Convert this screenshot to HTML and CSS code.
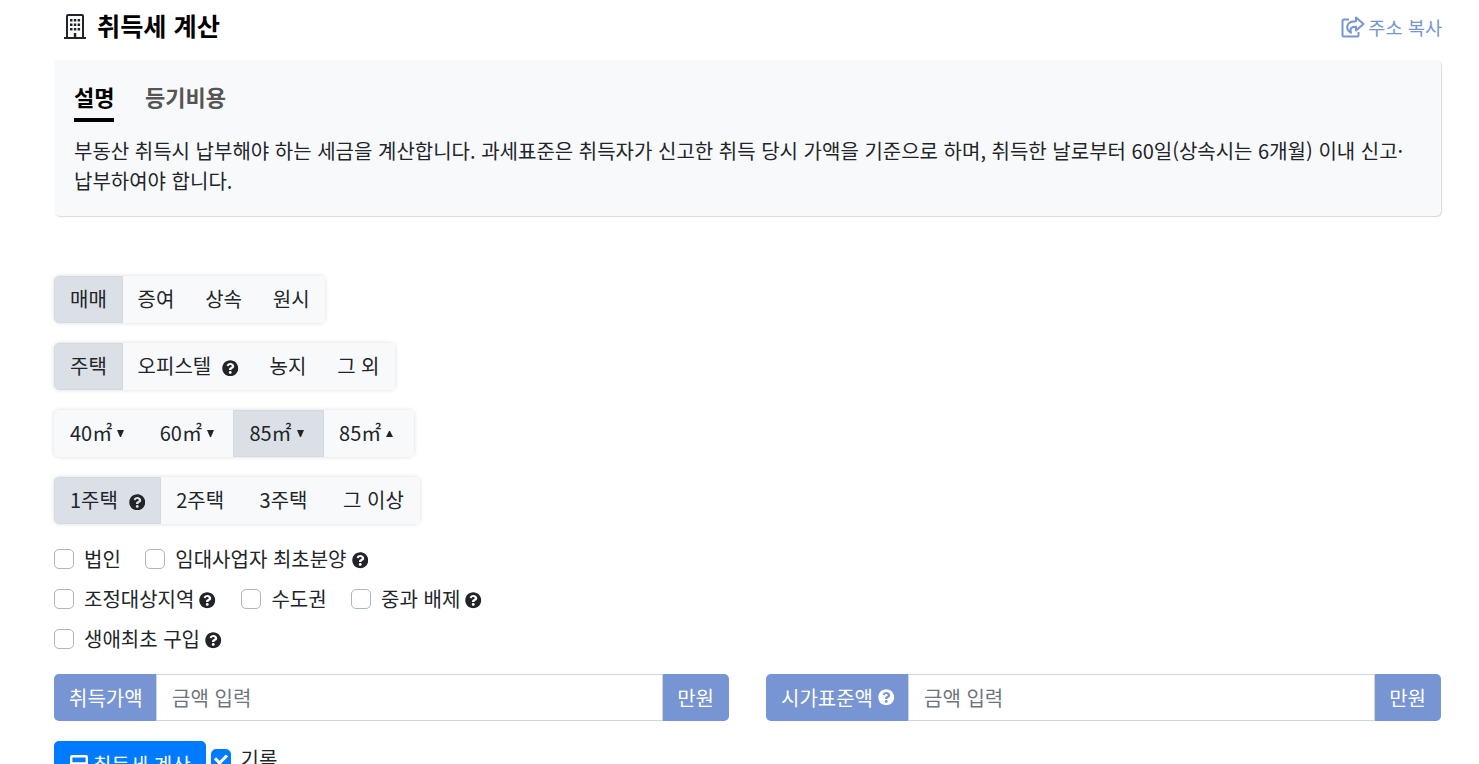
FILE: index.html
```html
<!DOCTYPE html>
<html lang="ko">
<head>
  <meta charset="UTF-8" />
  <meta name="viewport" content="width=device-width, initial-scale=1.0" />
  <title>취득세 계산</title>
  <link rel="stylesheet" href="styles.css">
</head>
<body>

  <!-- 아이콘 -->
  <svg class="sprite" aria-hidden="true">
    <symbol id="help" viewBox="0 0 512 512">
      <path d="M504 256c0 136.997-111.043 248-248 248S8 392.997 8 256C8 119.083 119.043 8 256 8s248 111.083 248 248zM262.655 90c-54.497 0-89.255 22.957-116.549 63.758-3.536 5.286-2.353 12.415 2.715 16.258l34.699 26.31c5.205 3.947 12.621 3.008 16.665-2.122 17.864-22.658 30.113-35.797 57.303-35.797 20.429 0 45.698 13.148 45.698 32.958 0 14.976-12.363 22.667-32.534 33.976C247.128 238.528 216 254.941 216 296v4c0 6.627 5.373 12 12 12h56c6.627 0 12-5.373 12-12v-1.333c0-28.462 83.186-29.647 83.186-106.667 0-58.002-60.165-102-116.531-102zM256 338c-25.365 0-46 20.635-46 46 0 25.364 20.635 46 46 46s46-20.636 46-46c0-25.365-20.635-46-46-46z"/>
    </symbol>
  </svg>

  <main class="container">
    <header class="page-header">
      <h1 class="title">
        <svg class="icon-building" viewBox="0 0 22 26">
          <path fill="none" stroke="currentColor" stroke-width="2" d="M3 24V3q0-1 1-1h14q1 0 1 1v21M0 25h22"/>
          <path fill="currentColor" d="M6 6h2.500v2.500H6zM9.800 6h2.500v2.500H9.800zM13.600 6h2.500v2.500h-2.500zM6 10.500h2.500V13H6zM9.800 10.500h2.500V13H9.800zM13.600 10.500h2.500V13h-2.500zM6 15h2.500v2.500H6zM9.800 15h2.500v2.500H9.800zM13.600 15h2.500v2.500h-2.500zM9.800 20h2.500v4H9.800z"/>
        </svg>
        취득세 계산
      </h1>
      <a class="copy-link" href="#">
        <svg class="icon-share" viewBox="0 0 24 22">
          <path d="M8 3.500H3q-1.500 0-1.500 1.500v14q0 1.500 1.500 1.500h13q1.500 0 1.500-1.500v-3"/>
          <path d="M15 1.500l7.500 6.500-7.500 6.500v-3.800c-4.500 0-6.500 1.300-5 6-5.800-3.500-5.500-11.500 5-11.500z"/>
        </svg>
        <span>주소 복사</span>
      </a>
    </header>

    <section class="info">
      <nav class="tabs">
        <a class="tab active" href="#">설명</a>
        <a class="tab" href="#">등기비용</a>
      </nav>
      <p>부동산 취득시 납부해야 하는 세금을 계산합니다. 과세표준은 취득자가 신고한 취득 당시 가액을 기준으로 하며, 취득한 날로부터 60일(상속시는 6개월) 이내 신고·납부하여야 합니다.</p>
    </section>

    <form class="calc">
      <div class="btn-group">
        <button type="button" class="btn active">매매</button>
        <button type="button" class="btn">증여</button>
        <button type="button" class="btn">상속</button>
        <button type="button" class="btn">원시</button>
      </div>
      <div class="btn-group">
        <button type="button" class="btn active">주택</button>
        <button type="button" class="btn">오피스텔<svg class="help"><use href="#help"/></svg></button>
        <button type="button" class="btn">농지</button>
        <button type="button" class="btn">그 외</button>
      </div>
      <div class="btn-group">
        <button type="button" class="btn wide">40㎡<i class="down"></i></button>
        <button type="button" class="btn wide">60㎡<i class="down"></i></button>
        <button type="button" class="btn wide active">85㎡<i class="down"></i></button>
        <button type="button" class="btn wide">85㎡<i class="up"></i></button>
      </div>
      <div class="btn-group">
        <button type="button" class="btn active">1주택<svg class="help"><use href="#help"/></svg></button>
        <button type="button" class="btn wide">2주택</button>
        <button type="button" class="btn wide">3주택</button>
        <button type="button" class="btn">그 이상</button>
      </div>

      <div class="checks">
        <div class="check-row">
          <label class="check"><input type="checkbox">법인</label>
          <label class="check"><input type="checkbox">임대사업자 최초분양<svg class="help"><use href="#help"/></svg></label>
        </div>
        <div class="check-row">
          <label class="check"><input type="checkbox">조정대상지역<svg class="help"><use href="#help"/></svg></label>
          <label class="check"><input type="checkbox">수도권</label>
          <label class="check"><input type="checkbox">중과 배제<svg class="help"><use href="#help"/></svg></label>
        </div>
        <div class="check-row">
          <label class="check"><input type="checkbox">생애최초 구입<svg class="help"><use href="#help"/></svg></label>
        </div>
      </div>

      <div class="amounts">
        <div class="input-group">
          <span class="addon">취득가액</span>
          <input type="text" placeholder="금액 입력">
          <span class="addon unit">만원</span>
        </div>
        <div class="input-group">
          <span class="addon">시가표준액<svg class="help"><use href="#help"/></svg></span>
          <input type="text" placeholder="금액 입력">
          <span class="addon unit">만원</span>
        </div>
      </div>

      <div class="actions">
        <button type="button" class="submit">
          <svg class="icon-calc" viewBox="0 0 18 20"><path fill="none" stroke="currentColor" stroke-width="2.400" d="M1.200 2.200q0-1 1-1h13.600q1 0 1 1v15.600q0 1-1 1H2.200q-1 0-1-1zM1.200 8.500h15.600"/></svg>
          취득세 계산
        </button>
        <label class="check"><input type="checkbox" checked>기록</label>
      </div>
    </form>
  </main>

</body>
</html>
```
FILE: styles.css
```css
* {
  box-sizing: border-box;
}

html {
  font-size: 20px;
}

body {
  margin: 0;
  height: 100vh;
  overflow: hidden;
  background: #fff;
  color: #212529;
  font-family: "Noto Sans CJK KR", "Noto Sans", sans-serif;
  line-height: 1.5;
}

button,
input {
  font: inherit;
  color: inherit;
}

.sprite {
  display: none;
}

.container {
  padding: 0 38px 0 54px;
}

/* 제목 */
.page-header {
  display: flex;
  justify-content: space-between;
  height: 60px;
}

.title {
  display: flex;
  align-items: center;
  gap: 11px;
  height: 52px;
  margin: 0 0 0 10px;
  font-size: 25.2px;
  font-weight: 700;
  color: #000;
}

.icon-building {
  width: 22px;
  height: 26px;
  color: #212529;
}

.copy-link {
  display: flex;
  align-items: center;
  gap: 3px;
  height: 53px;
  margin-right: -1px;
  color: #7695d2;
  font-size: 18.6px;
  text-decoration: none;
}

.icon-share {
  width: 24px;
  height: 22px;
  margin-top: 1px;
  fill: none;
  stroke: currentColor;
  stroke-width: 2;
  stroke-linejoin: round;
}

/* 설명 */
.info {
  height: 156px;
  padding: 20px;
  border-radius: 5px;
  background: #f8f9fb;
  box-shadow: 1px 1px 1px rgba(0, 0, 0, 0.15);
}

.tabs {
  display: flex;
  gap: 30.5px;
}

.tab {
  height: 42px;
  border-bottom: 4px solid transparent;
  color: #555;
  font-size: 22px;
  font-weight: 700;
  text-decoration: none;
}

.tab.active {
  border-color: #000;
  color: #000;
}

.info p {
  margin: 14px 0 0;
  word-break: keep-all;
}

.calc {
  display: flex;
  flex-direction: column;
  align-items: flex-start;
  margin-top: 60px;
}

/* 선택 버튼 */
.btn-group {
  display: flex;
  margin-bottom: 20px;
  border-radius: 5px;
  background: #f8f9fb;
  box-shadow: 0 0 4px rgba(0, 0, 0, 0.15);
}

.btn {
  display: flex;
  align-items: center;
  height: 47px;
  padding: 0 14.8px 1px 15px;
  border: 1px solid #f8f9fb;
  background: #f8f9fb;
}

.btn.wide {
  padding-right: 19.5px;
}

.btn + .btn {
  margin-left: -1px;
}

.btn:first-child {
  border-radius: 5px 0 0 5px;
}

.btn.active {
  position: relative;
  border-color: #d3d9df;
  background: #dae0e5;
}

.help {
  width: 16.5px;
  height: 16.5px;
  margin: 3px 0 0 5px;
  fill: currentColor;
}

.btn .help {
  margin: 4px 0 0 11px;
}

.down,
.up {
  width: 7px;
  margin: 1px 0 0 5px;
  border: solid transparent;
  border-width: 0 3.5px;
}

.down {
  border-top: 7px solid #212529;
}

.up {
  margin-top: 2px;
  border-bottom: 6px solid #212529;
}

/* 체크박스 */
.check-row {
  display: flex;
  gap: 24.5px;
  height: 40px;
}

.check {
  display: flex;
  align-items: center;
  height: 30px;
}

.check input {
  appearance: none;
  display: grid;
  place-items: center;
  width: 20px;
  height: 20px;
  margin: 0 10px 0 0;
  border: 1px solid #adb5bd;
  border-radius: 5px;
  background: #fff;
}

.check .help {
  margin-right: 1px;
}

.check input:checked {
  border-color: #007bff;
  background: #007bff;
}

.check input:checked::before {
  content: "";
  width: 9px;
  height: 5px;
  margin-top: -3px;
  border: solid #fff;
  border-width: 0 0 3px 3px;
  transform: rotate(-45deg);
}

/* 금액 입력 */
.amounts {
  display: grid;
  grid-template-columns: 1fr 1fr;
  gap: 37px;
  width: 100%;
  margin-top: 10px;
}

.input-group {
  display: flex;
  height: 47px;
}

.addon {
  display: flex;
  align-items: center;
  padding: 0 13.5px 0 15px;
  border-radius: 5px 0 0 5px;
  background: #7695d2;
  color: #fff;
  white-space: nowrap;
}

.addon.unit {
  padding-right: 15px;
  padding-left: 14px;
  border-radius: 0 5px 5px 0;
}

.addon .help {
  margin-top: 0;
}

.input-group input {
  flex: 1;
  min-width: 0;
  padding: 0 15px;
  border: 1px solid #ced4da;
  border-radius: 0;
}

.input-group input::placeholder {
  color: #6c757d;
}

.actions {
  display: flex;
  gap: 5px;
  margin-top: 20px;
}

.submit {
  display: flex;
  align-items: center;
  gap: 5px;
  height: 47px;
  padding: 0 15px 0 16px;
  border: 0;
  border-radius: 5px;
  background: #007bff;
  color: #fff;
}

.icon-calc {
  width: 18px;
  height: 20px;
}

.actions .check {
  margin-top: 3px;
}
```
